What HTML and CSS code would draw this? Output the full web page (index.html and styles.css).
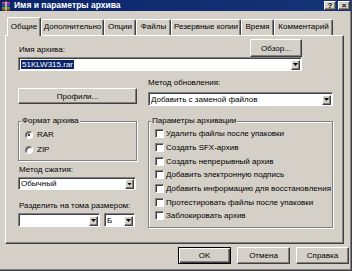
FILE: index.html
```html
<!DOCTYPE html>
<html lang="ru">

<head>
  <meta charset="utf-8">
  <title>Имя и параметры архива</title>
  <link rel="stylesheet" href="styles.css">
</head>

<body>
  <div class="window">
    <div class="titlebar">
      <svg class="app-icon" viewBox="0 0 10 10" width="10" height="10">
        <rect x="0.5" y="0.5" width="9" height="9" fill="#202020" />
        <rect x="1" y="1" width="8" height="2" fill="#c030c0" />
        <rect x="1" y="3.5" width="8" height="2" fill="#3050d0" />
        <rect x="1" y="6" width="8" height="2" fill="#30b040" />
        <rect x="1" y="8.2" width="8" height="1.3" fill="#d03030" />
        <rect x="4" y="0.5" width="2" height="9" fill="#c8b080" />
      </svg>
      <span class="title">Имя и параметры архива</span>
      <div class="caption-buttons">
        <span class="cap-btn">?</span>
        <span class="cap-btn">×</span>
      </div>
    </div>

    <div class="tabs">
      <div class="tab active">Общие</div>
      <div class="tab">Дополнительно</div>
      <div class="tab">Опции</div>
      <div class="tab">Файлы</div>
      <div class="tab">Резервные копии</div>
      <div class="tab">Время</div>
      <div class="tab">Комментарий</div>
    </div>

    <div class="panel">
      <div class="name-row">
        <span class="field-label">Имя архива:</span>
        <button class="btn browse">Обзор...</button>
      </div>
      <div class="combo name-combo">
        <span class="combo-text"><span class="selected">51KLW315.rar</span></span>
        <span class="combo-arrow"></span>
      </div>

      <div class="columns">
        <div class="col-left">
          <button class="btn profiles">Профили...</button>

          <fieldset class="group format-group">
            <legend>Формат архива</legend>
            <div class="radio-row"><span class="radio checked"></span>RAR</div>
            <div class="radio-row"><span class="radio"></span>ZIP</div>
          </fieldset>

          <div class="field-label method-label">Метод сжатия:</div>
          <div class="combo method-combo">
            <span class="combo-text">Обычный</span>
            <span class="combo-arrow"></span>
          </div>

          <div class="field-label split-label">Разделить на тома размером:</div>
          <div class="split-row">
            <div class="combo size-combo">
              <span class="combo-text"></span>
              <span class="combo-arrow"></span>
            </div>
            <div class="combo unit-combo">
              <span class="combo-text">Б</span>
              <span class="combo-arrow"></span>
            </div>
          </div>
        </div>

        <div class="col-right">
          <div class="field-label update-label">Метод обновления:</div>
          <div class="combo update-combo">
            <span class="combo-text">Добавить с заменой файлов</span>
            <span class="combo-arrow"></span>
          </div>

          <fieldset class="group options-group">
            <legend>Параметры архивации</legend>
            <div class="check-row"><span class="checkbox"></span>Удалить файлы после упаковки</div>
            <div class="check-row"><span class="checkbox"></span>Создать SFX-архив</div>
            <div class="check-row"><span class="checkbox"></span>Создать непрерывный архив</div>
            <div class="check-row"><span class="checkbox"></span>Добавить электронную подпись</div>
            <div class="check-row"><span class="checkbox"></span>Добавить информацию для восстановления</div>
            <div class="check-row"><span class="checkbox"></span>Протестировать файлы после упаковки</div>
            <div class="check-row"><span class="checkbox"></span>Заблокировать архив</div>
          </fieldset>
        </div>
      </div>
    </div>

    <div class="dialog-buttons">
      <button class="btn dlg-btn default">OK</button>
      <button class="btn dlg-btn">Отмена</button>
      <button class="btn dlg-btn">Справка</button>
    </div>
  </div>
</body>

</html>
```

FILE: styles.css
```css
body,
html {
  margin: 0;
  padding: 0;
  background: #d4d0c8;
  overflow: hidden;
}

body {
  font-family: "Liberation Sans", Arial, sans-serif;
  font-size: 8px;
  color: #000;
}

.window {
  width: 352px;
  height: 271px;
  box-sizing: border-box;
  background: #d4d0c8;
  border-right: 1px solid #404040;
  border-bottom: 1px solid #404040;
  box-shadow: inset -1px -1px #808080;
}

/* title bar */
.titlebar {
  height: 11px;
  display: flex;
  align-items: center;
  padding: 0 1px;
  background: linear-gradient(90deg, #0a246a, #163479);
  color: #fff;
}

.app-icon {
  display: block;
  margin-right: 3px;
}

.title {
  flex: 1;
  font-weight: bold;
  font-size: 8.5px;
  line-height: 11px;
  white-space: nowrap;
}

.caption-buttons {
  display: flex;
  gap: 2px;
}

.cap-btn {
  width: 12px;
  height: 9px;
  box-sizing: border-box;
  background: #d4d0c8;
  border: 1px solid;
  border-color: #fff #404040 #404040 #fff;
  box-shadow: inset -1px -1px #808080;
  color: #000;
  font-weight: bold;
  font-size: 8px;
  line-height: 7px;
  text-align: center;
}

/* tabs */
.tabs {
  display: flex;
  align-items: flex-end;
  height: 18px;
  margin-top: 6px;
  padding-left: 7px;
  position: relative;
  z-index: 1;
}

.tab {
  height: 16px;
  box-sizing: border-box;
  border: 1px solid;
  border-bottom: none;
  border-color: #fff #404040 #fff #fff;
  box-shadow: inset -1px 0 #808080;
  border-radius: 2px 2px 0 0;
  background: #d4d0c8;
  text-align: center;
  line-height: 14px;
  white-space: nowrap;
}

.tab.active {
  height: 19px;
  margin-bottom: -1px;
  line-height: 17px;
}

.tab:nth-child(1) { width: 34px; }
.tab:nth-child(2) { width: 63px; }
.tab:nth-child(3) { width: 32px; }
.tab:nth-child(4) { width: 35px; }
.tab:nth-child(5) { width: 70px; }
.tab:nth-child(6) { width: 33px; }
.tab:nth-child(7) { width: 59px; }

/* tab page */
.panel {
  margin-left: 5px;
  width: 339px;
  height: 209px;
  box-sizing: border-box;
  border: 1px solid;
  border-color: #fff #404040 #404040 #fff;
  box-shadow: inset -1px -1px #808080;
  padding: 3px 0 0 12px;
}

.field-label {
  line-height: 10px;
  white-space: nowrap;
}

.name-row {
  display: flex;
  justify-content: space-between;
  align-items: flex-end;
  width: 284px;
  height: 18px;
}

.name-row .field-label {
  padding: 0 0 2px 1px;
}

.btn {
  box-sizing: border-box;
  padding: 0;
  background: #d4d0c8;
  border: 1px solid;
  border-color: #fff #404040 #404040 #fff;
  box-shadow: inset -1px -1px #808080;
  font: inherit;
  color: #000;
  text-align: center;
  cursor: default;
}

.browse {
  width: 52px;
  height: 18px;
}

/* combo boxes */
.combo {
  display: flex;
  align-items: center;
  height: 14px;
  box-sizing: border-box;
  background: #fff;
  border: 1px solid;
  border-color: #808080 #fff #fff #808080;
  box-shadow: inset 1px 1px #404040;
  padding: 1px 1px 0 2px;
}

.combo-text {
  flex: 1;
  line-height: 10px;
  white-space: nowrap;
  overflow: hidden;
}

.combo-arrow {
  width: 9px;
  height: 10px;
  box-sizing: border-box;
  display: flex;
  align-items: center;
  justify-content: center;
  background: #d4d0c8;
  border: 1px solid;
  border-color: #fff #404040 #404040 #fff;
  box-shadow: inset -1px -1px #808080;
}

.combo-arrow::after {
  content: "";
  width: 5px;
  height: 3px;
  background: #000;
  clip-path: polygon(0 0, 100% 0, 50% 100%);
}

.name-combo {
  width: 284px;
}

.selected {
  background: #0a246a;
  color: #fff;
  padding: 0 1px;
}

/* columns */
.columns {
  display: flex;
  gap: 11px;
}

.col-left {
  width: 119px;
}

.col-right {
  width: 185px;
}

.profiles {
  display: block;
  width: 119px;
  height: 16px;
  margin-top: 17px;
}

/* group boxes */
.group {
  margin: 0;
  box-sizing: border-box;
  border: 1px solid #808080;
  box-shadow: inset 1px 1px #fff, 1px 1px #fff;
  padding: 1px 0 0 6px;
  min-width: 0;
}

.group legend {
  padding: 0 1px;
  margin-left: -4px;
  line-height: 10px;
  background: #d4d0c8;
}

.format-group {
  margin-top: 12px;
  width: 119px;
  height: 45px;
}

.options-group {
  margin-top: 10px;
  width: 185px;
  height: 112px;
}

.radio-row {
  display: flex;
  align-items: center;
  height: 15px;
}

.radio {
  width: 8px;
  height: 8px;
  box-sizing: border-box;
  border-radius: 50%;
  border: 1px solid;
  border-color: #808080 #fff #fff #808080;
  box-shadow: inset 1px 1px #404040;
  background: #fff;
  margin-right: 4px;
  display: flex;
  align-items: center;
  justify-content: center;
}

.radio.checked::after {
  content: "";
  width: 2px;
  height: 2px;
  border-radius: 50%;
  background: #000;
}

.check-row {
  display: flex;
  align-items: center;
  height: 13.7px;
  white-space: nowrap;
}

.checkbox {
  width: 9px;
  height: 9px;
  box-sizing: border-box;
  border: 1px solid;
  border-color: #808080 #fff #fff #808080;
  box-shadow: inset 1px 1px #404040;
  background: #fff;
  margin-right: 2px;
}

.method-label {
  margin-top: 4px;
  padding-left: 1px;
}

.method-combo {
  margin-top: 2px;
  height: 13px;
  width: 118px;
}

.split-label {
  margin-top: 11px;
  padding-left: 1px;
}

.split-row {
  display: flex;
  gap: 4px;
  margin-top: 2px;
}

.size-combo {
  width: 82px;
}

.unit-combo {
  width: 31px;
}

.update-label {
  margin-top: 7px;
}

.update-combo {
  margin-top: 4px;
  width: 185px;
}

/* dialog buttons */
.dialog-buttons {
  display: flex;
  justify-content: flex-end;
  gap: 6px;
  margin-top: 3px;
  padding-right: 2px;
}

.dlg-btn {
  width: 53px;
  height: 17px;
}

.dlg-btn.default {
  border-color: #000;
  box-shadow: inset 1px 1px #fff, inset -1px -1px #404040, inset -2px -2px #808080;
}
```
